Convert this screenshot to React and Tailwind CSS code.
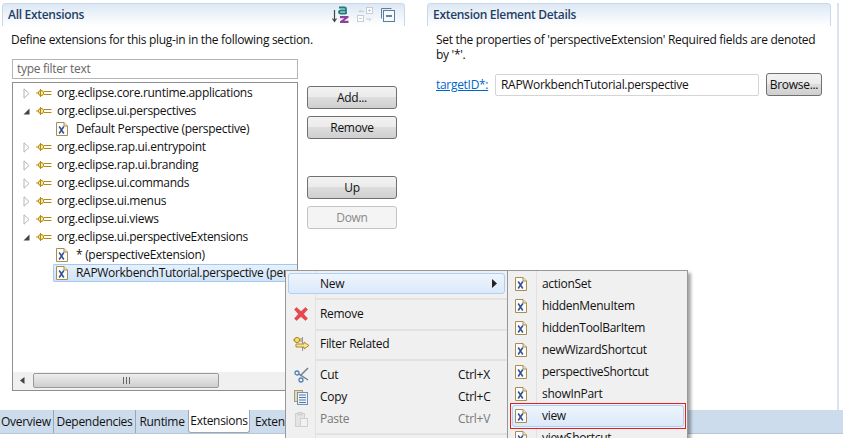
const XmlIcon = ({ muted }) => (
  <svg width="12" height="14" viewBox="0 0 12 14" className="shrink-0">
    <path d="M.5.5h7.5l3.5 3.5v9.500h-11z" fill="#fbfcfd" stroke={muted ? "#bbb" : "#a98c4e"} />
    <path d="M8 .5v3.500h3.500" fill="#f1e6c8" stroke="#a98c4e" />
    <path d="M3.200 4.500l4.600 7M7.800 4.500l-4.600 7" stroke="#34508a" strokeWidth="1.500" fill="none" />
  </svg>
);

const ExtIcon = () => (
  <svg width="16" height="10" viewBox="0 0 16 10" className="shrink-0">
    <path d="M0 5h2M8 3.500h7.500M8 6.500h7.500" stroke="#b5890f" strokeWidth="1.200" />
    <circle cx="5" cy="5" r="2.600" fill="#f8e9a8" stroke="#b5890f" />
    <path d="M4.500 1v8" stroke="#b5890f" />
  </svg>
);

const Twisty = ({ open }) =>
  open ? (
    <svg width="7" height="7" viewBox="0 0 7 7" className="shrink-0"><path d="M6.500.5v6h-6z" fill="#444" /></svg>
  ) : (
    <svg width="7" height="11" viewBox="0 0 7 11" className="shrink-0"><path d="M1 .8l5 4.700-5 4.700z" fill="#fff" stroke="#b4b4b4" /></svg>
  );

const SortIcon = () => (
  <svg width="17" height="18" viewBox="0 0 17 18" fill="none">
    <path d="M2.500 4v11M.5 12.500l2 3 2-3" stroke="#444" strokeWidth="1.200" />
    <path d="M7 1.500h5.500q1.500 0 1.500 1.500v5M14 4.500H9q-2 0-2 1.500t2 1.500h5" stroke="#1f7f78" strokeWidth="1.800" />
    <path d="M8 10h8.500v1.800l-4.500 3h4.500V17H8v-1.800l4.500-3H8z" fill="#8f3f97" />
  </svg>
);

const FilterIcon = () => (
  <svg width="16" height="16" viewBox="0 0 16 16" fill="none" stroke="#c5ccd3">
    <rect x="9.500" y=".5" width="6" height="6" fill="#fff" />
    <rect x=".5" y="8.500" width="6" height="6" fill="#fff" />
    <path d="M11 3.500h3M12.500 2v3M2 11.500h3M2 4.500h5M9 12h5M2 4.500l2-2M14 12l-2 2" />
  </svg>
);

const CollapseIcon = () => (
  <svg width="14" height="14" viewBox="0 0 14 14" fill="none" stroke="#5d7d9c">
    <path d="M.5 10.500V.5h10" />
    <rect x="2.500" y="2.500" width="11" height="11" fill="#f7fafc" />
    <path d="M5 8h6" stroke="#2f5f8f" strokeWidth="1.500" />
  </svg>
);

const RemoveIcon = () => (
  <svg width="14" height="14" viewBox="0 0 14 14">
    <path d="M2.500.5L7 4.500 11.500.5l2 2L9.500 7l4 4.500-2 2L7 9.500l-4.500 4-2-2L4.500 7 .5 2.500z" fill="#e8474c" stroke="#d33a40" strokeWidth=".5" />
  </svg>
);

const FilterRelatedIcon = () => (
  <svg width="17" height="16" viewBox="0 0 17 16" fill="none">
    <circle cx="4" cy="4" r="2.600" fill="#f4dc82" stroke="#a8860f" />
    <path d="M0 4h1M7 3h3M7 5h3" stroke="#a8860f" />
    <path d="M9.500 1v14" stroke="#8a9aa8" />
    <path d="M3 8h8V6l5 3.500-5 3.500v-2H3z" fill="#f6e3a0" stroke="#b08c24" />
  </svg>
);

const CutIcon = () => (
  <svg width="15" height="16" viewBox="0 0 15 16" fill="none">
    <path d="M14 1L6 9M5 7l9 6" stroke="#71808f" strokeWidth="1.500" />
    <circle cx="3" cy="6" r="2" stroke="#4f81b5" strokeWidth="1.300" />
    <circle cx="7" cy="13" r="2" stroke="#4f81b5" strokeWidth="1.300" />
  </svg>
);

const CopyIcon = () => (
  <svg width="14" height="15" viewBox="0 0 14 15" fill="none">
    <rect x=".5" y=".5" width="8" height="11" fill="#e6d9b5" stroke="#a99a70" />
    <rect x="3.500" y="2.500" width="10" height="12" fill="#eef4fa" stroke="#7191b3" />
    <path d="M5 5h7M5 7.500h7M5 10h7M5 12.500h7" stroke="#4f78a6" />
  </svg>
);

const PasteIcon = () => (
  <svg width="13" height="15" viewBox="0 0 13 15" fill="none" stroke="#cfcfcf">
    <rect x=".5" y="1.500" width="9" height="13" fill="#e4e4e4" />
    <rect x="3" y=".5" width="4" height="2.500" fill="#d8d8d8" />
    <rect x="5.500" y="6.500" width="7" height="8" fill="#f2f2f2" />
  </svg>
);

const treeRows = [
  { label: "org.eclipse.core.runtime.applications" },
  { label: "org.eclipse.ui.perspectives", open: true },
  { label: "Default Perspective (perspective)", leaf: true },
  { label: "org.eclipse.rap.ui.entrypoint" },
  { label: "org.eclipse.rap.ui.branding" },
  { label: "org.eclipse.ui.commands" },
  { label: "org.eclipse.ui.menus" },
  { label: "org.eclipse.ui.views" },
  { label: "org.eclipse.ui.perspectiveExtensions", open: true },
  { label: "* (perspectiveExtension)", leaf: true },
  { label: "RAPWorkbenchTutorial.perspective (perspectiveExtension)", leaf: true, selected: true },
];

const TreeRow = ({ row }) => {
  if (row.leaf) {
    return (
      <div
        className={`ml-[40px] flex h-[18px] items-center whitespace-nowrap pl-[2px] ${
          row.selected ? "rounded-l-[2px] border border-r-0 border-[#a5c8ef] bg-gradient-to-b from-[#e6f1fc] to-[#cfe3f8]" : "border border-transparent"
        }`}
      >
        <XmlIcon />
        <span className="ml-[8px]">{row.label}</span>
      </div>
    );
  }
  return (
    <div className="flex h-[18px] items-center whitespace-nowrap pl-[10px]">
      <span className="flex w-[7px] justify-center"><Twisty open={row.open} /></span>
      <span className="ml-[6px]"><ExtIcon /></span>
      <span className="ml-[5px]">{row.label}</span>
    </div>
  );
};

const Btn = ({ children, disabled, className = "" }) => (
  <button
    className={`flex h-[23px] w-[90px] items-center justify-center rounded-[3px] border ${
      disabled
        ? "border-[#c4c4c4] bg-[#f4f4f4] text-[#8a8a8a]"
        : "border-[#707070] bg-[linear-gradient(#f2f2f2_0%,#ebebeb_48%,#dddddd_50%,#cfcfcf_100%)]"
    } ${className}`}
  >
    {children}
  </button>
);

const PanelHeader = ({ title, children }) => (
  <div className="flex h-[23px] items-center justify-between rounded-t-[4px] border-x border-t border-[#c8d8e8] bg-gradient-to-b from-[#dde8f4] to-white pb-[1px] pl-[5px] pr-[9px]">
    <span className="font-semibold text-[#1f3f66]">{title}</span>
    {children}
  </div>
);

const MenuSep = () => <div className="mb-[1px] ml-[30px] mt-[3px] h-[2px] bg-[#e2e2e2]" />;

const MenuItem = ({ icon, label, shortcut, muted, tall }) => (
  <div className={`flex items-center ${tall ? "h-[24px]" : "h-[22px]"} ${muted ? "text-[#7a7a7a]" : ""}`}>
    <span className="flex w-[30px] shrink-0 justify-center">{icon}</span>
    <span className="ml-[4px]">{label}</span>
    {shortcut && <span className="absolute left-[172px]">{shortcut}</span>}
  </div>
);

const subItems = ["actionSet", "hiddenMenuItem", "hiddenToolBarItem", "newWizardShortcut", "perspectiveShortcut", "showInPart"];

export default function App() {
  return (
    <div className="relative flex h-[438px] w-[843px] flex-col overflow-hidden bg-white text-[12px] leading-[16px] tracking-[-0.3px] text-[#111] [font-family:'Open_Sans',sans-serif]">
      <div className="flex flex-1 pt-[3px]">
        <section className="ml-[2px] w-[403px] shrink-0">
          <PanelHeader title="All Extensions">
            <div className="flex items-center gap-[8px]">
              <SortIcon />
              <FilterIcon />
              <CollapseIcon />
            </div>
          </PanelHeader>
          <p className="mt-[6px] pl-[9px]">Define extensions for this plug-in in the following section.</p>
          <div className="mt-[11px] flex pl-[10px]">
            <div className="w-[286px]">
              <div className="flex h-[20px] items-center border border-[#b5b5b5] pl-[4px] text-[#666]">type filter text</div>
              <div className="mt-[3px] flex h-[309px] flex-col overflow-hidden border border-[#8f8f8f]">
                <div className="flex-1 overflow-hidden pt-[1px]">
                  {treeRows.map((row) => (
                    <TreeRow key={row.label} row={row} />
                  ))}
                </div>
                <div className="flex h-[18px] shrink-0 items-center bg-[#f0f0f0] pb-[2px] pl-[7px]">
                  <svg width="5" height="7" viewBox="0 0 5 7" className="shrink-0"><path d="M4.500 0v7L0 3.500z" fill="#444" /></svg>
                  <div className="ml-[8px] flex h-[15px] w-[186px] items-center justify-center rounded-[2px] border border-[#9a9a9a] bg-gradient-to-b from-[#ededed] to-[#cfcfcf]">
                    <span className="h-[7px] w-[7px] bg-[repeating-linear-gradient(90deg,#666_0_1px,transparent_1px_3px)]" />
                  </div>
                </div>
              </div>
            </div>
            <div className="ml-[9px] mt-[27px] flex flex-col">
              <Btn>Add...</Btn>
              <Btn className="mt-[7px]">Remove</Btn>
              <Btn className="mt-[37px]">Up</Btn>
              <Btn disabled className="mt-[7px]">Down</Btn>
            </div>
          </div>
        </section>

        <section className="ml-[22px] w-[404px] shrink-0">
          <PanelHeader title="Extension Element Details" />
          <p className="mt-[6px] w-[395px] pl-[9px] leading-[15px]">
            Set the properties of 'perspectiveExtension' Required fields are denoted by '*'.
          </p>
          <div className="mt-[11px] flex items-center pl-[9px]">
            <a className="w-[59px] text-[#0066cc] underline">targetID*:</a>
            <div className="flex h-[22px] w-[264px] items-center rounded-[2px] border border-[#d5d5d5] pl-[5px]">RAPWorkbenchTutorial.perspective</div>
            <Btn className="ml-[7px] !w-[56px]">Browse...</Btn>
          </div>
        </section>
        <div className="ml-[6px] w-[2px] bg-[#dbe4ee]" />
      </div>

      <div className="mb-[4px] flex h-[24px] shrink-0 items-stretch border-b border-[#b9c6d8] bg-[#cddcec]">
        <span className="flex w-[54px] items-center border-r border-[#9aa7b5] pl-[1px]">Overview</span>
        <span className="flex w-[82px] items-center justify-center border-r border-[#9aa7b5]">Dependencies</span>
        <span className="flex w-[52px] items-center justify-center">Runtime</span>
        <span className="flex w-[62px] items-center justify-center rounded-b-[3px] border-x border-b border-[#9aa7b5] bg-white">Extensions</span>
        <span className="flex items-center pl-[5px]">Extensions</span>
      </div>

      <div className="absolute left-[285px] top-[270px] h-[175px] w-[223px] border border-[#979797] bg-[#f0f0f0]">
        <div className="absolute bottom-0 left-[29px] top-0 w-px bg-[#e2e2e2]" />
        <div className="relative pt-[2px]">
          <div className="mx-[2px] flex h-[21px] items-center rounded-[3px] border border-[#aecff7] bg-gradient-to-b from-[#eef5fd] to-[#dbe9f9]">
            <span className="ml-[31px]">New</span>
            <svg width="5" height="9" viewBox="0 0 5 9" className="ml-auto mr-[7px]"><path d="M0 0l5 4.500L0 9z" fill="#222" /></svg>
          </div>
          <div className="mt-[4px]"><MenuSep /></div>
          <div className="mt-[2px]"><MenuItem tall icon={<RemoveIcon />} label="Remove" /></div>
          <MenuSep />
          <MenuItem tall icon={<FilterRelatedIcon />} label="Filter Related" />
          <MenuSep />
          <div className="mt-[3px]"><MenuItem icon={<CutIcon />} label="Cut" shortcut="Ctrl+X" /></div>
          <MenuItem icon={<CopyIcon />} label="Copy" shortcut="Ctrl+C" />
          <MenuItem muted icon={<PasteIcon />} label="Paste" shortcut="Ctrl+V" />
          <MenuSep />
        </div>
      </div>

      <div className="absolute left-[507px] top-[270px] h-[175px] w-[181px] border border-[#979797] bg-[#f0f0f0] shadow-[3px_3px_3px_rgba(0,0,0,0.35)]">
        <div className="absolute bottom-0 left-[28px] top-0 w-px bg-[#e2e2e2]" />
        <div className="relative pt-[2px]">
          {subItems.map((item) => (
            <div key={item} className="flex h-[22px] items-center pl-[7px]">
              <XmlIcon />
              <span className="ml-[15px]">{item}</span>
            </div>
          ))}
          <div className="-mt-[2px] ml-[2px] mr-[1px] flex h-[26px] items-center border border-[#e01f26] p-[1px]">
            <div className="flex h-full w-full items-center rounded-[3px] border border-[#aecff7] bg-gradient-to-b from-[#eef5fd] to-[#dbe9f9] pl-[2px]">
              <XmlIcon />
              <span className="ml-[15px]">view</span>
            </div>
          </div>
          <div className="-mt-[2px] flex h-[22px] items-center pl-[7px]">
            <XmlIcon />
            <span className="ml-[15px]">viewShortcut</span>
          </div>
        </div>
      </div>
    </div>
  );
}
